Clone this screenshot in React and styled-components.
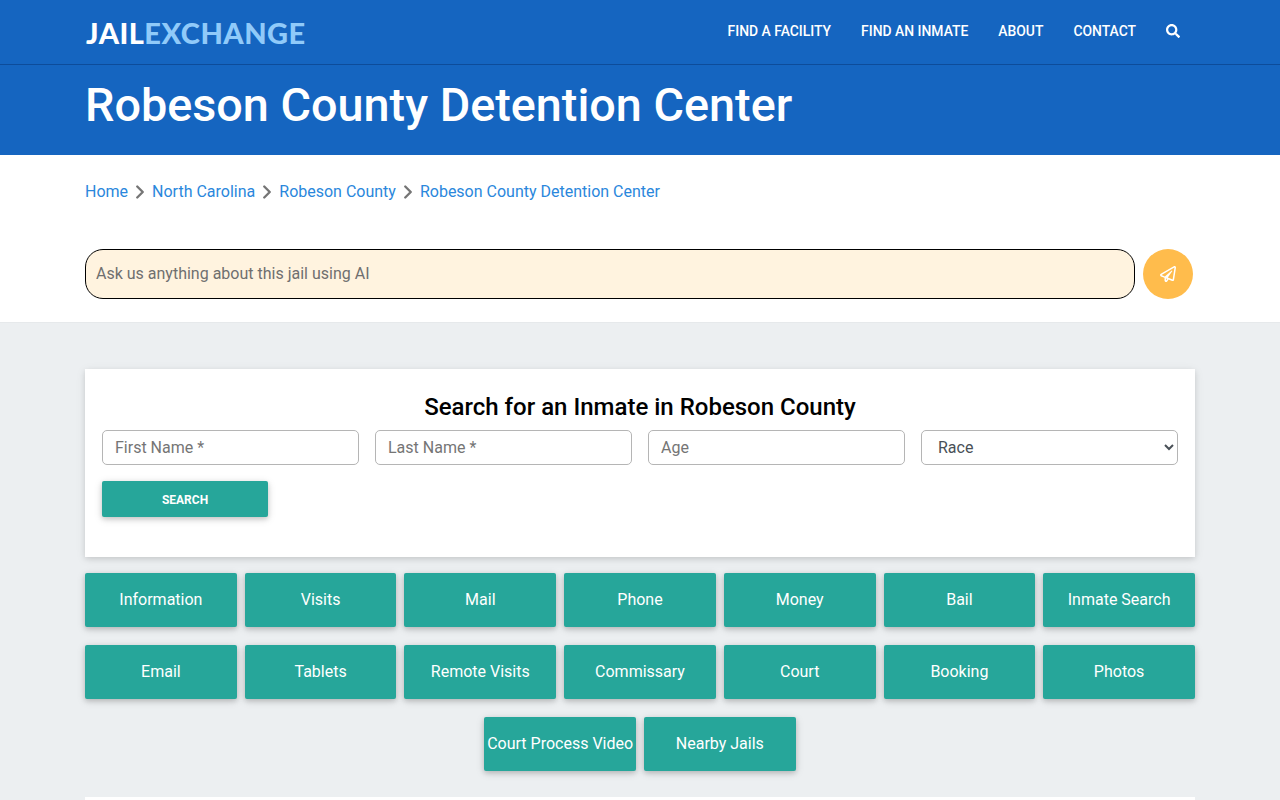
import React from 'react'
import styled, { createGlobalStyle } from 'styled-components'
import { FaSearch, FaRegPaperPlane } from 'react-icons/fa'
import { ChevronRight } from 'lucide-react'

const GlobalStyle = createGlobalStyle`
  html, body {
    margin: 0;
    padding: 0;
    background: #eceff1;
    font-family: Roboto, "Liberation Sans", sans-serif;
  }
  * { box-sizing: border-box; }
`

const Page = styled.div`
  height: 100vh;
  overflow: hidden;
`

const Container = styled.div`
  width: 1110px;
  margin: 0 auto;
`

const Navbar = styled.nav`
  height: 65px;
  background: #1565c0;
  border-bottom: 1px solid #0d4c9a;
  box-shadow: 0 1px 2px rgba(0, 0, 0, 0.15);
`

const NavInner = styled(Container)`
  height: 64px;
  display: flex;
  align-items: center;
  justify-content: space-between;
`

const Logo = styled.a`
  font-family: Lato, sans-serif;
  font-weight: 900;
  font-size: 29px;
  letter-spacing: 0.47px;
  color: #fff;
  margin: 0 0 0 1px;
  span { color: #90caf9; }
`

const NavLinks = styled.ul`
  display: flex;
  align-items: center;
  gap: 30px;
  list-style: none;
  margin: 0 15px 3px 0;
  padding: 0;
`

const NavLink = styled.li`
  color: #fff;
  font-size: 13.9px;
  font-weight: 500;
  text-transform: uppercase;
  svg { display: block; width: 14px; height: 14px; }
`

const TitleBar = styled.header`
  height: 90px;
  background: #1565c0;
`

const Title = styled.h1`
  margin: 0;
  padding-top: 8px;
  color: #fff;
  font-size: 46.75px;
  line-height: 64px;
  font-weight: 500;
`

const TopSection = styled.section`
  height: 168px;
  background: #fff;
  border-bottom: 1px solid #e6e9eb;
`

const Crumbs = styled.ol`
  display: flex;
  align-items: flex-start;
  list-style: none;
  margin: 0;
  padding: 27px 0 0;
  height: 94px;
  font-size: 16px;
  line-height: 19px;
`

const Crumb = styled.li`
  display: flex;
  align-items: center;
  height: 19px;
  color: #2a87dc;
  svg { color: #757575; margin: 1px 1px 0; }
`

const AskRow = styled.form`
  display: flex;
  align-items: center;
  gap: 8px;
`

const AskInput = styled.input`
  width: 1050px;
  height: 50px;
  padding: 0 10px 2px;
  background: #fff3df;
  border: 1px solid #000;
  border-radius: 18px;
  font: 400 16px Roboto, sans-serif;
  &::placeholder { color: #6f6f6f; opacity: 1; }
`

const AskButton = styled.button`
  width: 50px;
  height: 50px;
  padding: 0;
  border: 0;
  border-radius: 50%;
  background: #ffbc4c;
  color: #fff;
  display: flex;
  align-items: center;
  justify-content: center;
  svg { width: 16px; height: 16px; }
`

const Main = styled.main`
  padding-top: 46px;
`

const SearchCard = styled.form`
  height: 188px;
  background: #fff;
  padding: 22px 17px 0;
  box-shadow: 0 2px 5px rgba(0, 0, 0, 0.1), 0 2px 10px rgba(0, 0, 0, 0.08);
`

const CardTitle = styled.h2`
  margin: 0 0 6px;
  text-align: center;
  font-size: 24px;
  line-height: 33px;
  font-weight: 500;
  color: #000;
`

const Fields = styled.div`
  display: grid;
  grid-template-columns: repeat(4, 257px);
  column-gap: 16px;
`

const fieldStyles = `
  width: 100%;
  height: 35px;
  background: #fff;
  border: 1px solid #b5b5b5;
  border-radius: 5px;
  font: 400 16px Roboto, sans-serif;
  color: #495057;
`

const Field = styled.input`
  ${fieldStyles}
  padding: 0 12px;
  &::placeholder { color: #757575; opacity: 1; }
`

const RaceSelect = styled.select`
  ${fieldStyles}
  padding: 0 12px;
`

const SearchButton = styled.button`
  display: block;
  width: 166px;
  height: 36px;
  margin-top: 16px;
  padding: 2px 0 0;
  border: 0;
  border-radius: 2px;
  background: #26a69a;
  color: #fff;
  font: 700 12px Roboto, sans-serif;
  text-transform: uppercase;
  box-shadow: 0 2px 5px rgba(0, 0, 0, 0.16), 0 2px 10px rgba(0, 0, 0, 0.12);
`

const LinkGrid = styled.div`
  display: flex;
  flex-wrap: wrap;
  justify-content: center;
  gap: 18px 8px;
  margin-top: 16px;
`

const LinkButton = styled.a`
  width: 151.71px;
  height: 54px;
  padding-bottom: 2px;
  display: flex;
  align-items: center;
  justify-content: center;
  border-radius: 2px;
  background: #26a69a;
  color: #fff;
  font-size: 16px;
  white-space: nowrap;
  box-shadow: 0 2px 5px rgba(0, 0, 0, 0.16), 0 2px 10px rgba(0, 0, 0, 0.12);
`

const NextCard = styled.div`
  height: 200px;
  margin-top: 26px;
  background: #fff;
`

const navItems = ['Find a Facility', 'Find an Inmate', 'About', 'Contact']
const crumbs = ['Home', 'North Carolina', 'Robeson County', 'Robeson County Detention Center']
const links = [
  'Information', 'Visits', 'Mail', 'Phone', 'Money', 'Bail', 'Inmate Search',
  'Email', 'Tablets', 'Remote Visits', 'Commissary', 'Court', 'Booking', 'Photos',
  'Court Process Video', 'Nearby Jails',
]

export default function App() {
  return (
    <Page>
      <GlobalStyle />
      <Navbar>
        <NavInner>
          <Logo>JAIL<span>EXCHANGE</span></Logo>
          <NavLinks>
            {navItems.map((item) => <NavLink key={item}>{item}</NavLink>)}
            <NavLink><FaSearch /></NavLink>
          </NavLinks>
        </NavInner>
      </Navbar>
      <TitleBar>
        <Container>
          <Title>Robeson County Detention Center</Title>
        </Container>
      </TitleBar>
      <TopSection>
        <Container>
          <Crumbs>
            {crumbs.map((c, i) => (
              <Crumb key={c}>
                {c}
                {i < crumbs.length - 1 && <ChevronRight size={22} strokeWidth={2.6} />}
              </Crumb>
            ))}
          </Crumbs>
          <AskRow>
            <AskInput placeholder="Ask us anything about this jail using AI" />
            <AskButton type="button"><FaRegPaperPlane /></AskButton>
          </AskRow>
        </Container>
      </TopSection>
      <Main>
        <Container>
          <SearchCard>
            <CardTitle>Search for an Inmate in Robeson County</CardTitle>
            <Fields>
              <Field placeholder="First Name *" />
              <Field placeholder="Last Name *" />
              <Field placeholder="Age" />
              <RaceSelect defaultValue="Race">
                <option>Race</option>
              </RaceSelect>
            </Fields>
            <SearchButton type="button">Search</SearchButton>
          </SearchCard>
          <LinkGrid>
            {links.map((l) => <LinkButton key={l}>{l}</LinkButton>)}
          </LinkGrid>
          <NextCard />
        </Container>
      </Main>
    </Page>
  )
}
